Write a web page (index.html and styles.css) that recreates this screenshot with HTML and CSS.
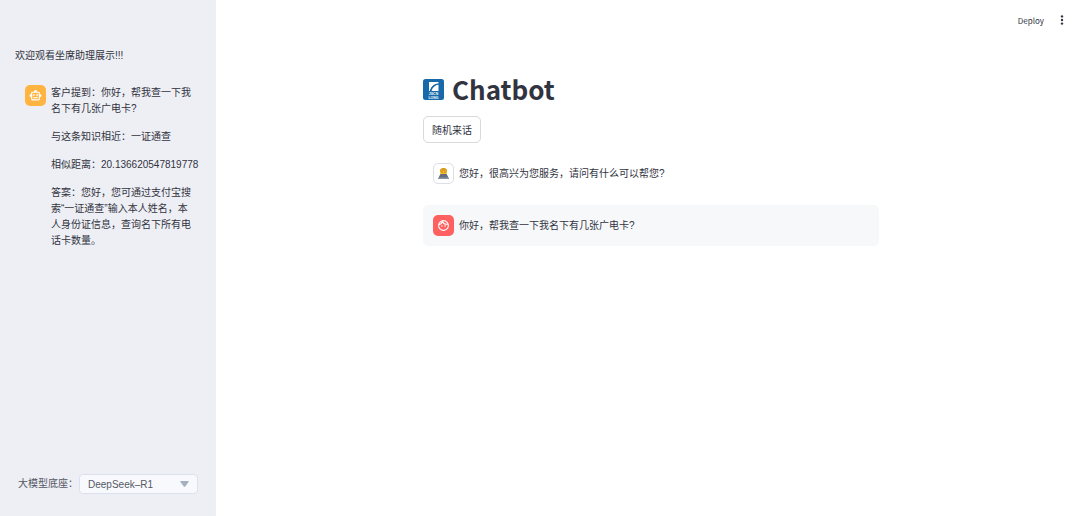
FILE: index.html
```html
<!DOCTYPE html>
<html lang="zh-CN">
<head>
    <meta charset="UTF-8">
    <meta name="viewport" content="width=device-width, initial-scale=1.0">
    <title>Chatbot</title>
    <link rel="stylesheet" href="styles.css">
</head>
<body>
    <div class="app">
        <aside class="sidebar">
            <p class="welcome">欢迎观看坐席助理展示!!!</p>
            <div class="message assistant">
                <div class="avatar avatar-bot">
                    <svg width="13" height="13" viewBox="0 0 24 24" fill="#fff">
                        <path fill-rule="evenodd" d="M20 9V7a2 2 0 0 0-2-2h-3a3 3 0 0 0-6 0H6a2 2 0 0 0-2 2v2a3 3 0 0 0 0 6v4a2 2 0 0 0 2 2h12a2 2 0 0 0 2-2v-4a3 3 0 0 0 0-6zM6 7h12v12H6z"/>
                        <circle cx="9" cy="11" r="1.6"/>
                        <circle cx="15" cy="11" r="1.6"/>
                        <path d="M8 15h8v2H8z"/>
                    </svg>
                </div>
                <div class="message-body">
                    <p>客户提到：你好，帮我查一下我名下有几张广电卡?</p>
                    <p>与这条知识相近：一证通查</p>
                    <p class="distance">相似距离：20.136620547819778</p>
                    <p>答案：您好，您可通过支付宝搜索“一证通查”输入本人姓名，本人身份证信息，查询名下所有电话卡数量。</p>
                </div>
            </div>
            <div class="model">
                <label for="model">大模型底座：</label>
                <div class="select-box">
                    <select id="model">
                        <option>DeepSeek–R1</option>
                    </select>
                    <svg class="arrow" width="9" height="6" viewBox="0 0 9 6" fill="#a4afbf">
                        <path d="M1 0h7q1 0 .6 1L5.2 5.4q-.7.8-1.4 0L.4 1Q0 0 1 0z"/>
                    </svg>
                </div>
            </div>
        </aside>

        <main class="main">
            <header class="toolbar">
                <button class="deploy" type="button">Deploy</button>
                <button class="menu" type="button" aria-label="Menu">
                    <svg width="4" height="10" viewBox="0 0 4 10" fill="#31333f">
                        <circle cx="2" cy="1.4" r="1.2"/>
                        <circle cx="2" cy="5" r="1.2"/>
                        <circle cx="2" cy="8.6" r="1.2"/>
                    </svg>
                </button>
            </header>
            <div class="content">
                <h1>
                    <svg class="logo" width="21" height="21" viewBox="0 0 42 42">
                        <rect width="42" height="42" rx="5" fill="#1769aa"/>
                        <path d="M12 6h19v3C22 10 16 15 14 24h-2z" fill="#fff"/>
                        <path d="M31 11v13H17C19 17 24 12 31 11z" fill="#fff"/>
                        <path d="M15 24C17 15 23 11 31 10" fill="none" stroke="#1769aa" stroke-width="2"/>
                        <text x="21" y="32" class="logo-text">JSCN</text>
                        <text x="21" y="39" class="logo-text">LONG</text>
                    </svg>
                    <span>Chatbot</span>
                </h1>
                <button class="random" type="button">随机来话</button>
                <div class="message">
                    <div class="avatar avatar-agent">
                        <svg width="11" height="11" viewBox="0 0 22 22">
                            <path d="M2 20v-3q0-3 4-3h10q4 0 4 3v3z" fill="#4f6fa8"/>
                            <rect x="4" y="1" width="14" height="13" rx="6" fill="#f4b92c"/>
                            <path d="M4 8C3 2 7 0 11 0s8 2 7 8l-3-3-5 1-4-1z" fill="#d99a1e"/>
                            <circle cx="8" cy="8" r="1" fill="#5f4218"/>
                            <circle cx="14" cy="8" r="1" fill="#5f4218"/>
                            <rect x="4" y="12" width="14" height="8" rx="1" fill="#666c78"/>
                            <path d="M0 19h22v2q0 1-1 1H1q-1 0-1-1z" fill="#8b939f"/>
                        </svg>
                    </div>
                    <div class="message-body"><p>您好，很高兴为您服务，请问有什么可以帮您?</p></div>
                </div>
                <div class="message user">
                    <div class="avatar avatar-user">
                        <svg width="13" height="13" viewBox="0 0 24 24" fill="none" stroke="#fff" stroke-width="2">
                            <circle cx="12" cy="12" r="9"/>
                            <path d="M3.5 10.5C7 10 9 8 10 4.500c2 4 6 6 10.500 5"/>
                            <circle cx="9" cy="13" r=".5"/>
                            <circle cx="15" cy="13" r=".5"/>
                        </svg>
                    </div>
                    <div class="message-body"><p>你好，帮我查一下我名下有几张广电卡?</p></div>
                </div>
            </div>
        </main>
    </div>
</body>
</html>
```
FILE: styles.css
```css
* {
    box-sizing: border-box;
}
body {
    margin: 0;
    font-family: "Liberation Sans", "Noto Sans CJK SC", sans-serif;
    font-size: 10px;
    line-height: 16px;
    color: #31333f;
    background-color: #fff;
}
p {
    margin: 0;
}
button,
select {
    font-family: inherit;
    font-size: 10px;
    color: inherit;
}
.app {
    display: flex;
    min-height: 100vh;
}
.sidebar {
    display: flex;
    flex-direction: column;
    width: 20%;
    min-width: 216px;
    padding: 48px 18px 22px 15px;
    background-color: #eeeff4;
}
.welcome {
    margin-bottom: 11px;
}
.message {
    display: flex;
    gap: 5px;
    padding: 10px;
    border-radius: 5px;
}
.assistant {
    padding-right: 0;
}
.message-body {
    flex: 1;
    min-width: 0;
    padding-top: 3px;
}
.message-body p + p {
    margin-top: 12px;
}
.assistant .message-body {
    padding-top: 0;
    padding-right: 2px;
}
.distance {
    white-space: nowrap;
}
.avatar {
    display: flex;
    flex-shrink: 0;
    align-items: center;
    justify-content: center;
    width: 21px;
    height: 21px;
    border-radius: 5px;
}
.avatar-bot {
    background-color: #ffb441;
}
.avatar-agent {
    background-color: #fff;
    border: 1px solid #dcdfe8;
}
.avatar-user {
    background-color: #ff6161;
}
.model {
    display: flex;
    align-items: center;
    gap: 1px;
    margin-top: auto;
    padding-left: 3px;
    color: #555864;
}
.model label {
    white-space: nowrap;
}
.select-box {
    position: relative;
    flex: 1;
}
.select-box select {
    display: block;
    width: 100%;
    height: 20px;
    padding: 0 8px;
    border: 1px solid #d9e2ee;
    border-radius: 4px;
    background-color: #f8f9fc;
    appearance: none;
}
.arrow {
    position: absolute;
    top: 7px;
    right: 9px;
    pointer-events: none;
}
.main {
    flex: 1;
}
.toolbar {
    display: flex;
    align-items: center;
    justify-content: flex-end;
    gap: 16px;
    height: 40px;
    padding-right: 16px;
}
.deploy,
.menu {
    display: flex;
    padding: 0;
    border: none;
    background: none;
    cursor: pointer;
}
.deploy {
    font-family: "Noto Sans CJK SC", sans-serif;
    font-size: 8px;
}
.content {
    max-width: 462px;
    margin: 0 auto;
    padding: 32px 0 32px 6px;
}
h1 {
    display: flex;
    align-items: center;
    gap: 8px;
    margin: 0 0 10px;
    font-family: "Noto Sans CJK SC", sans-serif;
    font-size: 26px;
    font-weight: 700;
    line-height: 34px;
}
.logo-text {
    font-family: "Liberation Sans", sans-serif;
    font-size: 7px;
    font-weight: 700;
    text-anchor: middle;
    fill: #fff;
}
.random {
    display: block;
    height: 27px;
    margin-bottom: 10px;
    padding: 0 8px;
    border: 1px solid #d8d9dd;
    border-radius: 5px;
    background-color: #fff;
    cursor: pointer;
}
.user {
    margin-top: 11px;
    background-color: #f7f8fa;
}
```
